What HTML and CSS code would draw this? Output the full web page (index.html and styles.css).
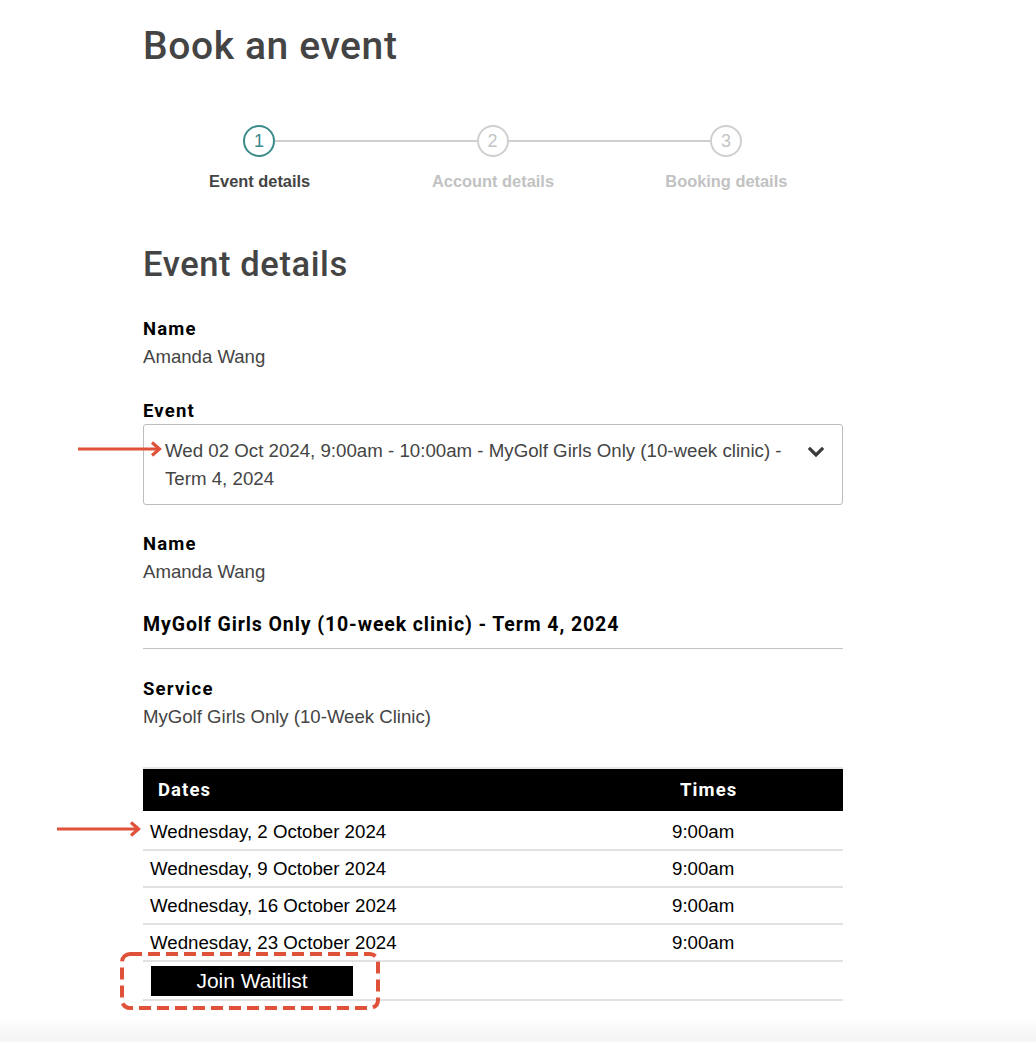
FILE: index.html
```html
<!DOCTYPE html>
<html lang="en">
<head>
<meta charset="utf-8">
<title>Book an event</title>
<link rel="stylesheet" href="styles.css">
</head>
<body>
<main class="page">
  <h1 class="title">Book an event</h1>

  <div class="stepper">
    <div class="step-track">
      <span class="step-circle active">1</span>
      <span class="step-line"></span>
      <span class="step-circle">2</span>
      <span class="step-line"></span>
      <span class="step-circle">3</span>
    </div>
    <div class="step-labels">
      <span class="step-label active">Event details</span>
      <span class="step-label">Account details</span>
      <span class="step-label">Booking details</span>
    </div>
  </div>

  <h2 class="section-title">Event details</h2>

  <div class="field">
    <div class="field-label">Name</div>
    <div class="field-value">Amanda Wang</div>
  </div>

  <div class="field field-event">
    <div class="field-label">Event</div>
    <div class="select">
      <span class="select-text">Wed 02 Oct 2024, 9:00am - 10:00am - MyGolf Girls Only (10-week clinic) - Term 4, 2024</span>
      <svg class="chevron" width="16" height="12" viewBox="0 0 16 12"><path d="M2 3 L8 9 L14 3" fill="none" stroke="#3a3a3a" stroke-width="3.2" stroke-linecap="square" stroke-linejoin="miter"/></svg>
      <svg class="arrow arrow-event" width="86" height="18" viewBox="0 0 86 18"><path d="M0 9 H80" stroke="#e0513a" stroke-width="3"/><path d="M74 2.5 L81.5 9 L74 15.5" fill="none" stroke="#e0513a" stroke-width="3.2"/></svg>
    </div>
  </div>

  <div class="field field-second">
    <div class="field-label">Name</div>
    <div class="field-value">Amanda Wang</div>
  </div>

  <div class="event-name">MyGolf Girls Only (10-week clinic) - Term 4, 2024</div>

  <div class="field field-service">
    <div class="field-label">Service</div>
    <div class="field-value">MyGolf Girls Only (10-Week Clinic)</div>
  </div>

  <table class="dates">
    <thead>
      <tr><th class="col-date">Dates</th><th class="col-time">Times</th></tr>
    </thead>
    <tbody>
      <tr class="first-row"><td class="cell-date">Wednesday, 2 October 2024<svg class="arrow arrow-date" width="86" height="18" viewBox="0 0 86 18"><path d="M0 9 H80" stroke="#e0513a" stroke-width="3"/><path d="M74 2.5 L81.5 9 L74 15.5" fill="none" stroke="#e0513a" stroke-width="3.2"/></svg></td><td>9:00am</td></tr>
      <tr><td>Wednesday, 9 October 2024</td><td>9:00am</td></tr>
      <tr><td>Wednesday, 16 October 2024</td><td>9:00am</td></tr>
      <tr><td>Wednesday, 23 October 2024</td><td>9:00am</td></tr>
      <tr class="button-row"><td class="cell-button"><button class="waitlist">Join Waitlist</button><svg class="highlight" width="260" height="58" viewBox="0 0 260 58"><rect x="2" y="2" width="256" height="54" rx="8" ry="8" fill="none" stroke="#e0513a" stroke-width="4" stroke-dasharray="12 6"/></svg></td><td></td></tr>
    </tbody>
  </table>
</main>
<footer class="footer"></footer>
</body>
</html>
```

FILE: styles.css
```css
* { box-sizing: border-box; }

html, body {
  margin: 0;
  padding: 0;
  background: #fff;
}

body {
  font-family: "Liberation Sans", Arial, sans-serif;
  color: #444;
}

.page {
  width: 700px;
  margin-left: 143px;
  padding-top: 24px;
}

.title {
  margin: 0;
  font-family: Roboto, "Liberation Sans", sans-serif;
  font-weight: 500;
  font-size: 39px;
  line-height: 44px;
  color: #444;
  letter-spacing: 0.6px;
}

/* Stepper */
.stepper {
  margin-top: 57px;
}

.step-track {
  display: flex;
  align-items: center;
  padding: 0 101px 0 100px;
}

.step-circle {
  width: 32px;
  height: 32px;
  flex: none;
  border: 2px solid #cfcfcf;
  border-radius: 50%;
  display: flex;
  align-items: center;
  justify-content: center;
  font-family: "Liberation Sans", Arial, sans-serif;
  font-size: 18px;
  color: #c4c4c4;
  background: #fff;
}

.step-circle.active {
  border-color: #3a8b8a;
  color: #3a8b8a;
}

.step-line {
  flex: 1;
  height: 2px;
  background: #cfcfcf;
}

.step-labels {
  display: grid;
  grid-template-columns: repeat(3, 1fr);
  margin-top: 14px;
  text-align: center;
}

.step-label {
  font-family: "Liberation Sans", Arial, sans-serif;
  font-weight: 700;
  font-size: 16.4px;
  line-height: 20px;
  color: #c2c2c2;
}

.step-label.active {
  color: #444;
}

/* Section */
.section-title {
  margin: 53px 0 0;
  font-family: Roboto, "Liberation Sans", sans-serif;
  font-weight: 500;
  font-size: 34.5px;
  line-height: 40px;
  color: #444;
  letter-spacing: 0.6px;
}

.field {
  margin-top: 33px;
}

.field-label {
  font-family: Roboto, "Liberation Sans", sans-serif;
  font-weight: 700;
  font-size: 18.5px;
  line-height: 24px;
  letter-spacing: 1.2px;
  color: #000;
}

.field-value {
  margin-top: 3px;
  font-family: "Liberation Sans", Arial, sans-serif;
  font-size: 18.6px;
  line-height: 26px;
  color: #444;
}

.field-event {
  margin-top: 29px;
}

.select {
  position: relative;
  margin-top: 1px;
  display: flex;
  align-items: flex-start;
  gap: 6px;
  padding: 12px 18px 10px 21px;
  border: 1px solid #bdbdbd;
  border-radius: 3px;
  height: 81px;
}

.select-text {
  flex: 1;
  font-family: "Liberation Sans", Arial, sans-serif;
  font-size: 18.7px;
  line-height: 28px;
  color: #444;
}

.chevron {
  flex: none;
  margin-top: 9px;
}

.arrow {
  position: absolute;
}

.arrow-event {
  left: -66px;
  top: 15px;
}

.field-second {
  margin-top: 27px;
}

.event-name {
  margin-top: 27px;
  padding-bottom: 10px;
  border-bottom: 1px solid #c4c4c4;
  font-family: Roboto, "Liberation Sans", sans-serif;
  font-weight: 700;
  font-size: 19.5px;
  line-height: 26px;
  letter-spacing: 0.9px;
  color: #000;
}

.field-service {
  margin-top: 28px;
}

/* Dates table */
.dates {
  width: 700px;
  margin-top: 37px;
  border-collapse: collapse;
  border-top: 2px solid #e6e6e6;
}

.dates th {
  background: #000;
  color: #fff;
  height: 43px;
  padding: 0 0 0 15px;
  text-align: left;
  font-family: Roboto, "Liberation Sans", sans-serif;
  font-weight: 700;
  font-size: 18.5px;
  letter-spacing: 1.1px;
}

.dates th.col-date {
  width: 522px;
}

.dates td {
  height: 37px;
  padding: 0 0 0 7px;
  border-bottom: 2px solid #e2e2e2;
  font-family: "Liberation Sans", Arial, sans-serif;
  font-size: 18.7px;
  color: #000;
  vertical-align: middle;
}

.dates .first-row td {
  height: 39px;
  padding-top: 3px;
}

.cell-date,
.cell-button {
  position: relative;
}

.arrow-date {
  left: -86px;
  top: 9px;
}

.button-row td {
  height: 39px;
  padding-left: 8px;
}

.waitlist {
  display: block;
  width: 202px;
  height: 30px;
  border: none;
  border-radius: 0;
  background: #000;
  color: #fff;
  font-family: "Liberation Sans", Arial, sans-serif;
  font-size: 21px;
  padding: 0;
  cursor: pointer;
}

.highlight {
  position: absolute;
  left: -23px;
  top: -10px;
}

.footer {
  margin-top: 17px;
  height: 30px;
  background: linear-gradient(#ffffff, #f6f6f6 60%);
}
```
